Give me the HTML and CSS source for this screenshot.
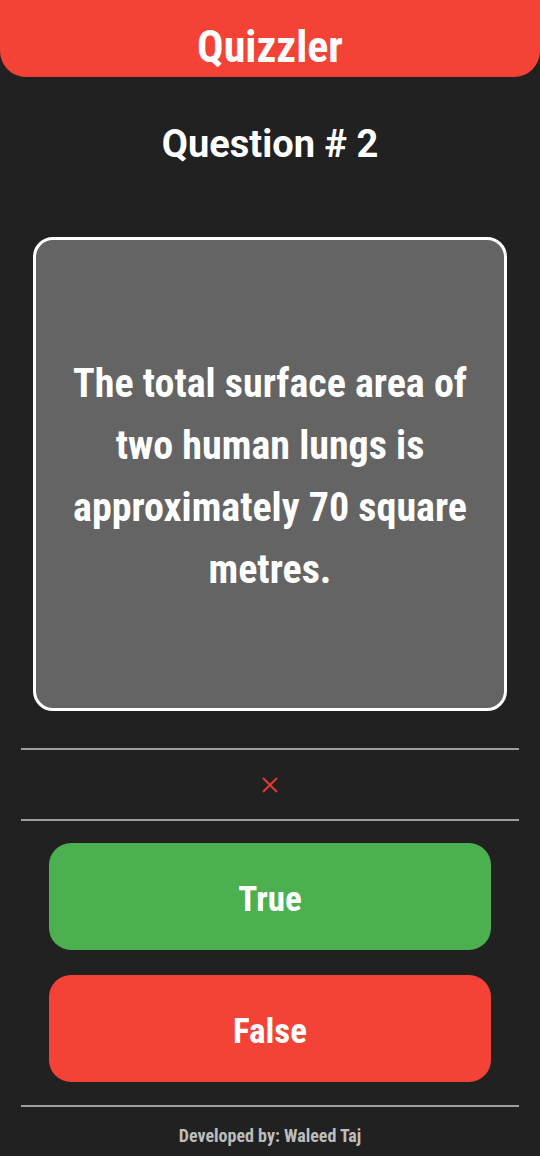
FILE: index.html
```html
<!DOCTYPE html>
<html>
<head>
<meta charset="utf-8">
<link rel="stylesheet" href="styles.css">
</head>
<body>
<div class="app">
  <header class="appbar"><h1 class="title">Quizzler</h1></header>
  <h2 class="qnum">Question # 2</h2>
  <div class="card-wrap">
    <div class="card">
      <p class="qtext">The total surface area of two human lungs is approximately 70 square metres.</p>
    </div>
  </div>
  <div class="score">
    <svg class="mark" width="18" height="18" viewBox="0 0 18 18"><path d="M2 2 L16 16 M16 2 L2 16" stroke="#e53935" stroke-width="2" fill="none"/></svg>
  </div>
  <div class="buttons">
    <button class="btn btn-true">True</button>
    <button class="btn btn-false">False</button>
  </div>
  <footer class="footer">Developed by: Waleed Taj</footer>
</div>
</body>
</html>
```
FILE: styles.css
```css
html, body {
  margin: 0;
  padding: 0;
  background: #212121;
}
.app {
  width: 540px;
  height: 1156px;
  display: flex;
  flex-direction: column;
  background: #212121;
}
.appbar {
  background: #f44336;
  height: 77px;
  border-radius: 0 0 26px 26px;
  display: flex;
  align-items: center;
  justify-content: center;
}
.title {
  margin: 0;
  padding-top: 16px;
  color: #fff;
  font-family: "Roboto Condensed", Roboto, sans-serif;
  font-weight: 700;
  font-size: 44px;
  line-height: 1;
}
.qnum {
  margin: 46px 0 0;
  height: 42px;
  text-align: center;
  color: #fff;
  font-family: Roboto, sans-serif;
  font-weight: 700;
  font-size: 38px;
  line-height: 42px;
}
.card-wrap {
  padding: 72px 33px 0;
}
.card {
  height: 468px;
  border: 3px solid #fff;
  border-radius: 20px;
  background: #646464;
  display: flex;
  align-items: center;
  justify-content: center;
  padding: 5px 24px 0;
  box-sizing: content-box;
}
.qtext {
  margin: 0;
  color: #fff;
  text-align: center;
  font-family: "Roboto Condensed", Roboto, sans-serif;
  font-weight: 700;
  font-size: 40px;
  line-height: 62px;
}
.card {
  height: 463px;
}
.score {
  margin: 37px 21px 0;
  height: 69px;
  border-top: 2px solid #9e9e9e;
  border-bottom: 2px solid #9e9e9e;
  display: flex;
  align-items: center;
  justify-content: center;
}
.buttons {
  padding: 22px 49px 0;
  display: flex;
  flex-direction: column;
  gap: 25px;
}
.btn {
  height: 107px;
  border: none;
  border-radius: 22px;
  padding: 5px 0 0;
  color: #fff;
  font-family: "Roboto Condensed", Roboto, sans-serif;
  font-weight: 700;
  font-size: 35px;
}
.btn-true { background: #4caf50; }
.btn-false { background: #f44336; }
.footer {
  margin: 23px 21px 0;
  border-top: 2px solid #9e9e9e;
  padding-top: 18px;
  text-align: center;
  color: #bdbdbd;
  font-family: "Roboto Condensed", Roboto, sans-serif;
  font-weight: 700;
  font-size: 18px;
}
```
